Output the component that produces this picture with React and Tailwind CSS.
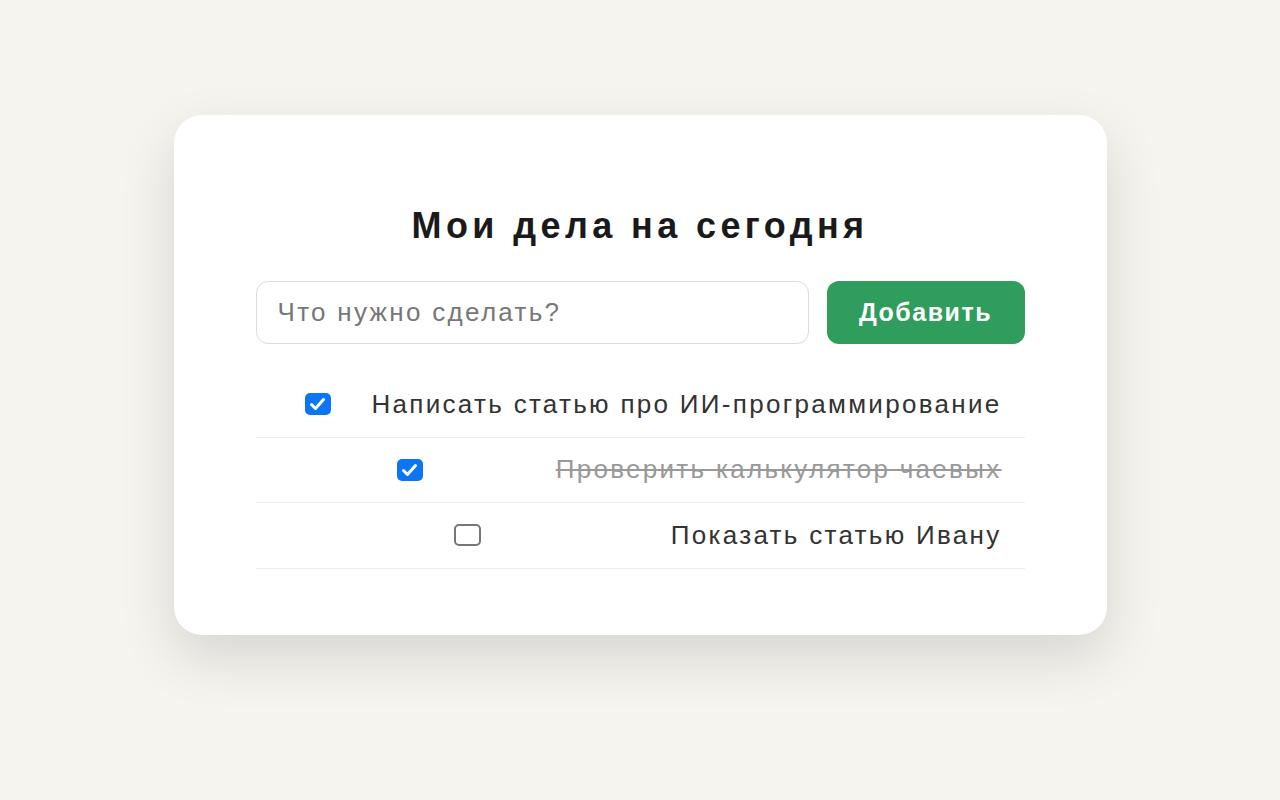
import React, { useState } from 'react';

const initialTasks = [
  { id: 1, text: 'Написать статью про ИИ-программирование', done: true, strike: false },
  { id: 2, text: 'Проверить калькулятор чаевых', done: true, strike: true },
  { id: 3, text: 'Показать статью Ивану', done: false, strike: false },
];

function Check({ checked, onClick }) {
  return (
    <button
      onClick={onClick}
      className={
        checked
          ? 'w-[26px] h-[22px] rounded-[5px] bg-[#0b76f4] flex items-center justify-center'
          : 'w-[27px] h-[22px] rounded-[5px] border-2 border-[#777] bg-white'
      }
    >
      {checked && (
        <svg width="17" height="14" viewBox="0 0 17 14" fill="none">
          <path d="M2.5 7.5l4 4L14.5 2.5" stroke="white" strokeWidth="3" strokeLinecap="round" strokeLinejoin="round" />
        </svg>
      )}
    </button>
  );
}

export default function App() {
  const [tasks, setTasks] = useState(initialTasks);
  const [value, setValue] = useState('');

  const toggle = (id) => {
    setTasks(tasks.map((t) => (t.id === id ? { ...t, done: !t.done } : t)));
  };

  const addTask = () => {
    if (!value.trim()) return;
    setTasks([...tasks, { id: Date.now(), text: value, done: false, strike: false }]);
    setValue('');
  };

  return (
    <div className="min-h-screen bg-[#f5f4ef] pt-[115px] font-['Liberation_Sans',Arial,sans-serif]">
      <div className="mx-auto w-[933px] bg-white rounded-[28px] shadow-[0_22px_55px_rgba(0,0,0,0.13)] px-[82px] pt-[91px] pb-[66px]">
        <h1 className="text-center text-[36px] leading-[40px] font-bold text-[#1a1a1a] tracking-[4.4px]">
          Мои дела на сегодня
        </h1>
        <div className="flex gap-[18px] mt-[35px]">
          <input
            value={value}
            onChange={(e) => setValue(e.target.value)}
            placeholder="Что нужно сделать?"
            className="flex-1 h-[63px] rounded-[12px] border border-[#dcdcdc] px-[21px] text-[26px] text-[#333] placeholder:text-[#777] outline-none tracking-[2.3px]"
          />
          <button
            onClick={addTask}
            className="w-[198px] h-[63px] rounded-[12px] bg-[#2f9d5c] text-white text-[25px] font-bold tracking-[1.5px]"
          >
            Добавить
          </button>
        </div>
        <ul className="mt-[28px]">
          {tasks.map((t) => (
            <li key={t.id} className="flex items-center h-[65.5px] pl-2 border-b border-[#ececec]">
              <div className="flex-1 flex justify-center">
                <Check checked={t.done} onClick={() => toggle(t.id)} />
              </div>
              <span
                className={
                  t.strike
                    ? 'pr-[23px] text-[26px] text-[#999] line-through tracking-[2.3px]'
                    : 'pr-[23px] text-[26px] text-[#333] tracking-[2.3px]'
                }
              >
                {t.text}
              </span>
            </li>
          ))}
        </ul>
      </div>
    </div>
  );
}
